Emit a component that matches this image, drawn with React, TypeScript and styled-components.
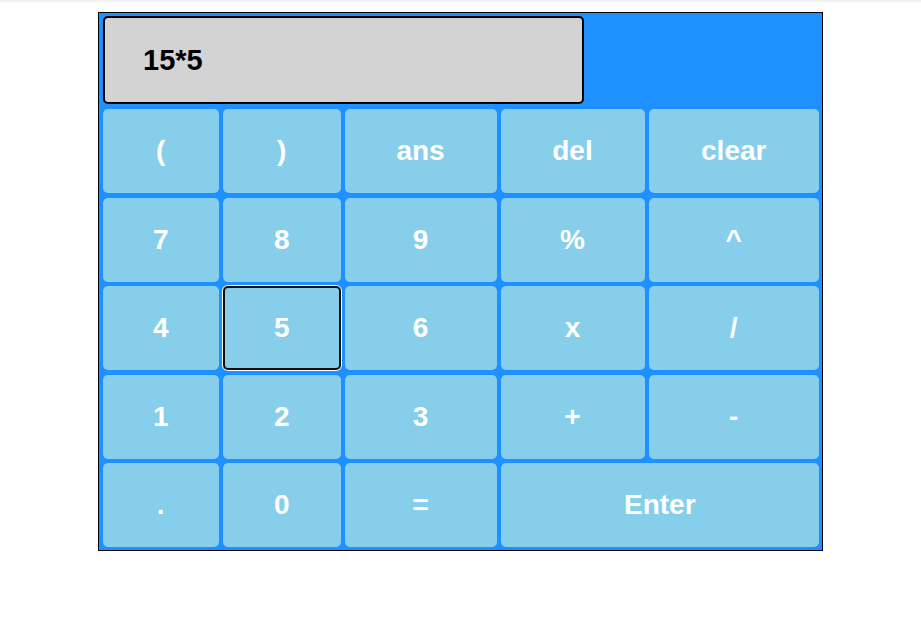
import React from "react";
import styled, { createGlobalStyle } from "styled-components";

const GlobalStyle = createGlobalStyle`
  html, body {
    margin: 0;
    padding: 0;
    background: #ffffff;
    font-family: "Liberation Sans", Arial, sans-serif;
  }
`;

const TopStrip = styled.div`
  height: 2px;
  background: #f2f2f2;
`;

const Calculator = styled.div`
  box-sizing: border-box;
  width: 725px;
  margin: 10px auto 0;
  border: 1px solid #000000;
  background: #1e90ff;
  padding: 3px 3px 3px 3.5px;
  display: flex;
  flex-direction: column;
  gap: 5px;
`;

const Display = styled.div`
  box-sizing: border-box;
  width: 481px;
  height: 88px;
  margin-left: 0.5px;
  background: #d3d3d3;
  border: 2px solid #000000;
  border-radius: 5px;
  padding-left: 38px;
  display: flex;
  align-items: center;
  font-size: 29px;
  font-weight: bold;
  color: #000000;
`;

const Keypad = styled.div`
  display: grid;
  grid-template-columns: 116.5px 117.5px 152px 144px 1fr;
  grid-auto-rows: 84px;
  column-gap: 4px;
  row-gap: 4.5px;
`;

const Key = styled.button<{ $span?: number; $focused?: boolean }>`
  grid-column: span ${(p) => p.$span ?? 1};
  border: none;
  border-radius: 5px;
  background: #87ceeb;
  color: #ffffff;
  font-family: "Liberation Sans", Arial, sans-serif;
  font-size: 28px;
  font-weight: bold;
  padding: 0;
  display: flex;
  align-items: center;
  justify-content: center;
  cursor: pointer;
  box-shadow: ${(p) =>
    p.$focused ? "inset 0 0 0 2px #101010, 0 0 0 1px #ffffff" : "none"};
`;

const keys: { label: string; span?: number; focused?: boolean }[] = [
  { label: "(" },
  { label: ")" },
  { label: "ans" },
  { label: "del" },
  { label: "clear" },
  { label: "7" },
  { label: "8" },
  { label: "9" },
  { label: "%" },
  { label: "^" },
  { label: "4" },
  { label: "5", focused: true },
  { label: "6" },
  { label: "x" },
  { label: "/" },
  { label: "1" },
  { label: "2" },
  { label: "3" },
  { label: "+" },
  { label: "-" },
  { label: "." },
  { label: "0" },
  { label: "=" },
  { label: "Enter", span: 2 },
];

export default function App() {
  return (
    <>
      <GlobalStyle />
      <TopStrip />
      <Calculator>
        <Display>15*5</Display>
        <Keypad>
          {keys.map((k) => (
            <Key key={k.label} $span={k.span} $focused={k.focused}>
              {k.label}
            </Key>
          ))}
        </Keypad>
      </Calculator>
    </>
  );
}
